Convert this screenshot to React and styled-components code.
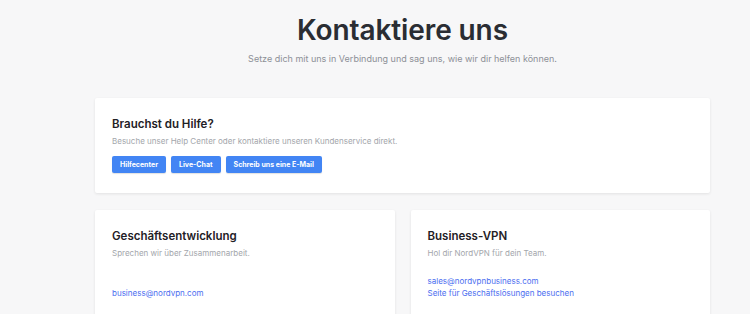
import styled, { createGlobalStyle } from "styled-components";

const GlobalStyle = createGlobalStyle`
  html, body {
    margin: 0;
    padding: 0;
    background: #f7f7f8;
    font-family: "Inter", "Noto Sans", sans-serif;
  }
`;

const Page = styled.div`
  box-sizing: border-box;
  width: 750px;
  min-height: 314px;
  padding-left: 55px;
  overflow: hidden;
  display: flex;
  flex-direction: column;
  align-items: center;
`;

const Title = styled.h1`
  margin: 13px 0 0;
  font-size: 28px;
  line-height: 34px;
  font-weight: 600;
  letter-spacing: -0.1px;
  color: #2a2d33;
`;

const Subtitle = styled.p`
  margin: 5px 0 0;
  font-size: 9px;
  line-height: 14px;
  color: #8d9097;
`;

const Grid = styled.div`
  width: 615px;
  margin-top: 32px;
  display: grid;
  grid-template-columns: 1fr 1fr;
  gap: 17px 16px;
`;

const Card = styled.section`
  grid-column: ${(p) => (p.$wide ? "1 / -1" : "auto")};
  background: #fff;
  border-radius: 2px;
  box-shadow: 0 1px 3px rgba(0, 0, 0, 0.09);
  padding: ${(p) => (p.$wide ? "19px 17px 20px" : "19px 17px 30px")};
`;

const CardTitle = styled.h2`
  margin: 0;
  font-size: 11.5px;
  line-height: 14px;
  font-weight: 600;
  color: #1f2126;
`;

const CardText = styled.p`
  margin: 4px 0 0;
  font-size: 8px;
  line-height: 12px;
  color: #a3a6ab;
`;

const Buttons = styled.div`
  display: flex;
  gap: 5px;
  margin-top: 9px;
`;

const Button = styled.a`
  display: inline-flex;
  align-items: center;
  height: 17px;
  padding: 0 8px;
  background: #4285f4;
  border-radius: 2px;
  color: #fff;
  font-size: 7px;
  font-weight: 700;
  text-decoration: none;
  box-shadow: 0 1px 1px rgba(0, 0, 0, 0.12);
`;

const Links = styled.div`
  display: flex;
  flex-direction: column;
  margin-top: ${(p) => p.$top}px;
`;

const Link = styled.a`
  font-size: 8px;
  line-height: 12px;
  color: #4b6ef0;
  text-decoration: none;
`;

export default function App() {
  return (
    <>
      <GlobalStyle />
      <Page>
        <Title>Kontaktiere uns</Title>
        <Subtitle>Setze dich mit uns in Verbindung und sag uns, wie wir dir helfen können.</Subtitle>
        <Grid>
          <Card $wide>
            <CardTitle>Brauchst du Hilfe?</CardTitle>
            <CardText>Besuche unser Help Center oder kontaktiere unseren Kundenservice direkt.</CardText>
            <Buttons>
              <Button href="#">Hilfecenter</Button>
              <Button href="#">Live-Chat</Button>
              <Button href="#">Schreib uns eine E-Mail</Button>
            </Buttons>
          </Card>
          <Card>
            <CardTitle>Geschäftsentwicklung</CardTitle>
            <CardText>Sprechen wir über Zusammenarbeit.</CardText>
            <Links $top={28}>
              <Link href="#">business@nordvpn.com</Link>
            </Links>
          </Card>
          <Card>
            <CardTitle>Business-VPN</CardTitle>
            <CardText>Hol dir NordVPN für dein Team.</CardText>
            <Links $top={16}>
              <Link href="#">sales@nordvpnbusiness.com</Link>
              <Link href="#">Seite für Geschäftslösungen besuchen</Link>
            </Links>
          </Card>
        </Grid>
      </Page>
    </>
  );
}
